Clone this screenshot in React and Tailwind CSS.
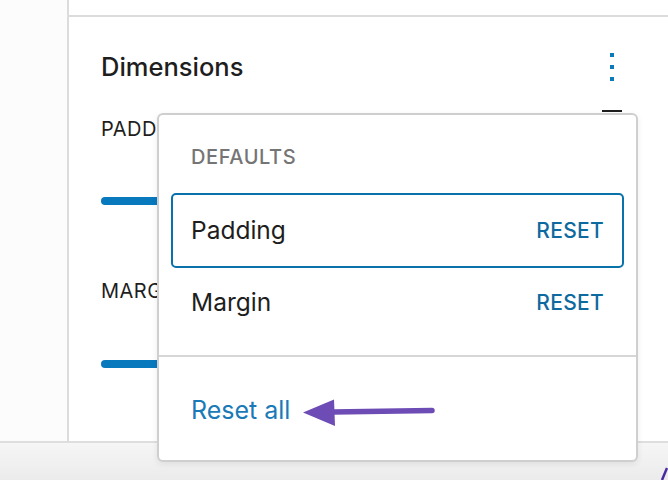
import React from 'react';

const FONT = { fontFamily: 'Inter, "Noto Sans", sans-serif' };

function Kebab() {
  return (
    <div className="flex flex-col items-center gap-[8px] w-[20px]">
      <span className="w-[4px] h-[4px] bg-[#0a7bb8]" />
      <span className="w-[4px] h-[4px] bg-[#0a7bb8]" />
      <span className="w-[4px] h-[4px] bg-[#0a7bb8]" />
    </div>
  );
}

function Control({ label, withIcon, labelTop, trackTop }) {
  return (
    <div className="flex flex-col">
      <div className="flex items-start justify-between">
        <span
          className="text-[20px] leading-[24px] tracking-[0.5px] text-[#1e1e1e]"
          style={{ marginTop: labelTop }}
        >
          {label}
        </span>
        {withIcon && <span className="w-[20px] h-[2px] bg-[#1e1e1e] mt-[27px]" />}
      </div>
      <div className="h-[8px] w-[300px] rounded-full bg-[#0879bd]" style={{ marginTop: trackTop }} />
    </div>
  );
}

function MenuRow({ label, selected }) {
  return (
    <div
      className={
        'flex items-center justify-between px-[18px] rounded-[5px] ' +
        (selected ? 'h-[75px] border-2 border-[#0a72ab]' : 'h-[69px] border-2 border-transparent')
      }
    >
      <span className="text-[24.5px] text-[#1e1e1e]">{label}</span>
      <span className="text-[21px] font-medium tracking-[0.3px] text-[#0d6a9e]">RESET</span>
    </div>
  );
}

export default function App() {
  return (
    <div className="relative w-[668px] h-[480px] overflow-hidden bg-white" style={FONT}>
      <div className="flex h-[441px]">
        <div className="w-[67px] bg-[#fcfcfc]" />
        <div className="flex-1 flex flex-col border-l-2 border-[#dcdcdc]">
          <div className="h-[17px] border-b-2 border-[#dcdcdc]" />
          <div className="flex flex-col pl-[32px] pr-[46px]">
            <div className="flex items-center justify-between mt-[34px] h-[32px]">
              <span className="text-[25.5px] font-medium text-[#1e1e1e]">Dimensions</span>
              <Kebab />
            </div>
            <Control label="PADDING" withIcon labelTop={34} trackTop={56} />
            <Control label="MARGIN" labelTop={74} trackTop={57} />
          </div>
        </div>
      </div>
      <div className="h-[39px] border-t-2 border-[#dedede] bg-gradient-to-b from-[#f6f6f6] to-[#ebebeb]" />

      {/* popover */}
      <div className="absolute left-[157px] top-[113px] w-[481px] h-[349px] bg-white border-2 border-[#cfcfcf] rounded-[6px] shadow-[0_2px_6px_rgba(0,0,0,0.08)] flex flex-col">
        <div className="px-[12px] pt-[30px] pb-[18px] flex flex-col">
          <span className="pl-[20px] text-[20px] font-medium tracking-[0.6px] text-[#757575] leading-[24px] mb-[24px]">DEFAULTS</span>
          <MenuRow label="Padding" selected />
          <MenuRow label="Margin" />
        </div>
        <div className="border-t-2 border-[#d6d6d6] flex-1 flex items-center pl-[32px] pt-[4px]">
          <span className="text-[25px] text-[#1a7ab8]">Reset all</span>
        </div>
      </div>

      {/* annotation arrow */}
      <svg className="absolute left-0 top-0" width="668" height="480" viewBox="0 0 668 480">
        <path d="M333 412 L432 410.5" stroke="#6d4cb6" strokeWidth="5.5" strokeLinecap="round" fill="none" />
        <path d="M303 412.5 L334 399.5 L335 426 Z" fill="#6d4cb6" />
        <path d="M662 480 L667 468" stroke="#4b2aa0" strokeWidth="2.5" fill="none" />
      </svg>
    </div>
  );
}
